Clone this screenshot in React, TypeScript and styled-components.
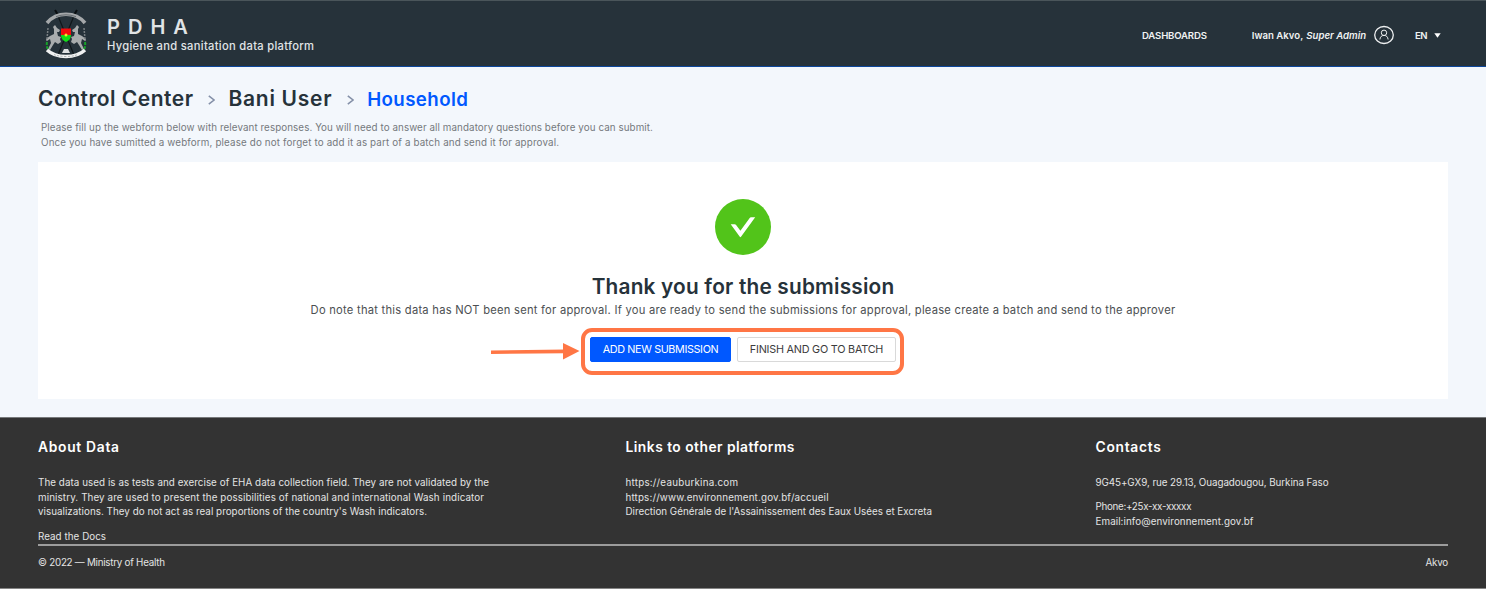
import React from "react";
import styled, { createGlobalStyle } from "styled-components";

const GlobalStyle = createGlobalStyle`
  *, *::before, *::after { box-sizing: border-box; }
  body { margin: 0; background: #fff; font-family: Inter, "Liberation Sans", sans-serif; }
  h1, h2, h3, p { margin: 0; }
  a { color: inherit; text-decoration: none; }
`;

const Page = styled.div`
  display: flex;
  flex-direction: column;
  width: 1486px;
  height: 589px;
  overflow: hidden;
`;

/* Single line of text with its own tracking */
const Line = styled.span<{ $track?: number }>`
  display: block;
  white-space: nowrap;
  letter-spacing: ${(p) => p.$track ?? 0}px;
`;

const Header = styled.header`
  display: flex;
  align-items: center;
  justify-content: space-between;
  flex: none;
  height: 67px;
  padding: 0 45px 0 45px;
  color: #e0e4e6;
  background: #26323a;
  border-top: 1px solid #4a555a;
  border-bottom: 1px solid #0c479c;
`;

const Brand = styled.div`
  display: flex;
  align-items: center;
  gap: 20px;
`;

const Emblem = styled.svg`
  display: block;
  width: 42px;
  height: 50px;
`;

const BrandName = styled.div`
  margin-top: 2px;
  font-size: 20px;
  font-weight: 600;
  line-height: 22px;
`;

const BrandTagline = styled.div`
  margin-top: 1px;
  font-size: 11.2px;
  font-weight: 500;
  line-height: 15px;
`;

const Nav = styled.nav`
  display: flex;
  align-items: center;
  margin-top: 3px;
  color: #f0f2f3;
  font-size: 9.6px;
  font-weight: 600;
  line-height: 18px;
`;

const NavText = styled.div`
  display: flex;
  padding-top: 2px;
`;

const Account = styled.div`
  display: flex;
  align-items: center;
  margin-left: 45px;
`;

const Role = styled.em`
  margin: 0 8px 0 3px;
  letter-spacing: 0px;
  white-space: nowrap;
`;

const Avatar = styled.svg`
  display: block;
  width: 20px;
  height: 20px;
`;

const Language = styled.div`
  display: flex;
  align-items: center;
  gap: 7px;
  margin-left: 21px;
`;

const Caret = styled.svg`
  display: block;
  width: 7px;
  height: 5px;
`;

const Main = styled.main`
  flex: none;
  height: 350px;
  padding: 18px 38px 0;
  background: #f3f7fc;
`;

const Breadcrumb = styled.div`
  display: flex;
  align-items: center;
  height: 28px;
  color: #26323a;
  font-size: 21px;
  font-weight: 600;
  line-height: 28px;
`;

const Chevron = styled.svg`
  flex: none;
  width: 7px;
  height: 10px;
  margin: 1px 13.5px 0 14.5px;
`;

const CurrentCrumb = styled.h1`
  margin-top: 1px;
  color: #0058ff;
  font-size: 18.7px;
  font-weight: 600;
`;

const Instructions = styled.div`
  margin: 8px 0 0 3px;
  color: #75797d;
  font-size: 9.8px;
  line-height: 14.7px;
`;

const Card = styled.section`
  display: flex;
  flex-direction: column;
  align-items: center;
  height: 237px;
  margin-top: 11.5px;
  padding-top: 37px;
  background: #fff;
`;

const SuccessIcon = styled.svg`
  display: block;
  width: 56px;
  height: 56px;
`;

const Title = styled.h2`
  margin-top: 18px;
  color: #26323a;
  font-size: 20.8px;
  font-weight: 600;
  line-height: 28px;
`;

const Note = styled.p`
  color: #4c4f52;
  font-size: 11.2px;
  line-height: 18px;
`;

const Actions = styled.div`
  position: relative;
  display: flex;
  gap: 6px;
  margin-top: 18px;
`;

const Button = styled.button<{ $primary?: boolean }>`
  display: flex;
  align-items: center;
  justify-content: center;
  width: ${(p) => (p.$primary ? 141 : 159)}px;
  height: 25px;
  padding: 0;
  border: 1px solid ${(p) => (p.$primary ? "#0058ff" : "#d9d9d9")};
  border-radius: 2px;
  color: ${(p) => (p.$primary ? "#fff" : "#3c3c3c")};
  background: ${(p) => (p.$primary ? "#0058ff" : "#fff")};
  font: 400 10.8px Inter, sans-serif;
`;

/* Annotation outline drawn over the buttons */
const Highlight = styled.div`
  position: absolute;
  top: -9px;
  left: -9px;
  width: 323px;
  height: 47px;
  border: 4px solid #ff7645;
  border-radius: 11px;
  pointer-events: none;
`;

const Arrow = styled.svg`
  position: absolute;
  top: 5px;
  left: -99px;
  width: 89px;
  height: 18px;
`;

const Footer = styled.footer`
  display: flex;
  flex-direction: column;
  flex: none;
  height: 172px;
  padding: 20px 38px 0;
  color: #e4e4e4;
  background: #333;
  border-top: 1px solid #77797b;
  border-bottom: 1px solid #858585;
  font-size: 9.8px;
  line-height: 14.7px;
`;

const Columns = styled.div`
  display: grid;
  grid-template-columns: 587.5px 470px 1fr;
  height: 106px;
`;

const ColumnTitle = styled.h3`
  margin-bottom: 20px;
  color: #fff;
  font-size: 13.8px;
  font-weight: 600;
  line-height: 18px;
`;

const Paragraph = styled.div`
  & + & { margin-top: 9.6px; }
`;

const Legal = styled.div`
  display: flex;
  justify-content: space-between;
  padding-top: 10px;
  border-top: 2px solid #9c9c9c;
`;

const Separator = () => (
  <Chevron viewBox="0 0 7 10">
    <path d="M.8.8 6 5 .8 9.2" fill="none" stroke="#8490a8" strokeWidth="1.5" />
  </Chevron>
);

const CoatOfArms = () => (
  <Emblem viewBox="0 0 42 50">
    <path d="M11 2 29 46M31 2 13 46" stroke="#11171a" strokeWidth="1.2" />
    <path d="m10 1 3 5M32 1l-3 5" stroke="#0a0e10" strokeWidth="2" />
    <path d="M2 14C7 8 13 5.3 21 5.3S35 8 40 14" fill="none" stroke="#a5a8aa" strokeWidth="3.6" />
    <path d="M11 7.6Q21 4 31 7.6" fill="none" stroke="#555d62" strokeWidth=".8" />
    <g fill="#a9acad">
      <path d="m10 16 2 3 3 2-1 2-2 0 1 4 3 1-1 2 1 3-3 2-3-2-2 3-3 5-2-1 3-6-1-4-3 2-1-2 4-3 4-2 0-5-1-2Z" />
      <path d="m32 16-2 3-3 2 1 2 2 0-1 4-3 1 1 2-1 3 3 2 3-2 2 3 3 5 2-1-3-6 1-4 3 2 1-2-4-3-4-2 0-5 1-2Z" />
    </g>
    <path d="M3 19 1.8 32M39 19l1.2 13" stroke="#777d80" strokeWidth="1.5" strokeDasharray="2 1" />
    <path d="M2 33q-1 5 2 9M40 33q1 5-2 9" fill="none" stroke="#16a329" strokeWidth="2" strokeDasharray="3 1.2" />
    <path d="M16 19.5h10v6.5H16Z" fill="#f20c0c" />
    <path d="M16 26h10q0 5-5 7-5-2-5-7Z" fill="#12dc18" />
    <circle cx="21" cy="26" r="1.5" fill="#f6e429" />
    <path d="m19 40 4 0 2 4H17Z" fill="#dfe1e2" />
    <path d="M2 41Q9 47.5 21 47.5T40 41" fill="none" stroke="#f0f1f1" strokeWidth="3.4" />
    <path d="M9 45.5q5 2 12 2t12-2" fill="none" stroke="#9b9fa1" strokeWidth=".8" strokeDasharray="2 1.5" />
  </Emblem>
);

export default function App() {
  return (
    <>
      <GlobalStyle />
      <Page>
        <Header>
          <Brand>
            <CoatOfArms />
            <div>
              <BrandName><Line $track={1.5}>P D H A</Line></BrandName>
              <BrandTagline><Line $track={0.297}>Hygiene and sanitation data platform</Line></BrandTagline>
            </div>
          </Brand>
          <Nav>
            <NavText><Line $track={-0.18}>DASHBOARDS</Line></NavText>
            <Account>
              <NavText>
                <Line $track={0.02}>Iwan Akvo,</Line>
                <Role>Super Admin</Role>
              </NavText>
              <Avatar viewBox="0 0 20 20" fill="none" stroke="#eef0f1">
                <ellipse cx="10" cy="10" rx="9.3" ry="8.5" strokeWidth="1.3" />
                <circle cx="10" cy="7.8" r="2.7" strokeWidth="1" />
                <path d="M5.9 14.5c.2-2.6 1.7-4.1 4.1-4.1s3.9 1.5 4.1 4.1" strokeWidth="1" />
              </Avatar>
            </Account>
            <Language>
              <NavText><Line $track={-0.6}>EN</Line></NavText>
              <Caret viewBox="0 0 7 5"><path d="M.3.3h6.4L3.5 4.7Z" fill="#fff" /></Caret>
            </Language>
          </Nav>
        </Header>
        <Main>
          <Breadcrumb>
            <Line $track={0.487}>Control Center</Line>
            <Separator />
            <Line $track={0.715}>Bani User</Line>
            <Separator />
            <CurrentCrumb><Line $track={0.4}>Household</Line></CurrentCrumb>
          </Breadcrumb>
          <Instructions>
            <Line $track={0.084}>Please fill up the webform below with relevant responses. You will need to answer all mandatory questions before you can submit.</Line>
            <Line $track={0.145}>Once you have sumitted a webform, please do not forget to add it as part of a batch and send it for approval.</Line>
          </Instructions>
          <Card>
            <SuccessIcon viewBox="0 0 56 56">
              <circle cx="28" cy="28" r="28" fill="#52c41a" />
              <path d="M15.7 25.2h4q.7 0 1.2.6l4.5 6 9.3-12.9q.5-.7 1.3-.7h4.2L26 37.8q-.6.7-1.2 0Z" fill="#fff" />
            </SuccessIcon>
            <Title><Line $track={0.2}>Thank you for the submission</Line></Title>
            <Note><Line $track={0.24}>Do note that this data has NOT been sent for approval. If you are ready to send the submissions for approval, please create a batch and send to the approver</Line></Note>
            <Actions>
              <Button $primary><Line $track={-0.364}>ADD NEW SUBMISSION</Line></Button>
              <Button><Line $track={-0.221}>FINISH AND GO TO BATCH</Line></Button>
              <Highlight />
              <Arrow viewBox="0 0 89 18">
                <path d="M0 10.2 74 9.4" stroke="#ff7645" strokeWidth="3.6" />
                <path d="M72 1 88.5 9 72 17.5Z" fill="#ff7645" />
              </Arrow>
            </Actions>
          </Card>
        </Main>
        <Footer>
          <Columns>
            <div>
              <ColumnTitle><Line $track={0.71}>About Data</Line></ColumnTitle>
              <Paragraph>
                <Line $track={0.062}>The data used is as tests and exercise of EHA data collection field. They are not validated by the</Line>
                <Line $track={0.114}>ministry. They are used to present the possibilities of national and international Wash indicator</Line>
                <Line $track={0.038}>visualizations. They do not act as real proportions of the country's Wash indicators.</Line>
              </Paragraph>
              <Paragraph><Line as="a" $track={0.05}>Read the Docs</Line></Paragraph>
            </div>
            <div>
              <ColumnTitle><Line $track={0.48}>Links to other platforms</Line></ColumnTitle>
              <Paragraph>
                <Line as="a" $track={0.23}>https://eauburkina.com</Line>
                <Line as="a" $track={0.164}>https://www.environnement.gov.bf/accueil</Line>
                <Line as="a" $track={0.007}>Direction Générale de l'Assainissement des Eaux Usées et Excreta</Line>
              </Paragraph>
            </div>
            <div>
              <ColumnTitle><Line $track={0.72}>Contacts</Line></ColumnTitle>
              <Paragraph><Line $track={-0.061}>9G45+GX9, rue 29.13, Ouagadougou, Burkina Faso</Line></Paragraph>
              <Paragraph>
                <Line $track={-0.291}>Phone:+25x-xx-xxxxx</Line>
                <Line $track={0.079}>Email:info@environnement.gov.bf</Line>
              </Paragraph>
            </div>
          </Columns>
          <Legal>
            <Line $track={-0.244}>© 2022 — Ministry of Health</Line>
            <Line $track={-0.2}>Akvo</Line>
          </Legal>
        </Footer>
      </Page>
    </>
  );
}
